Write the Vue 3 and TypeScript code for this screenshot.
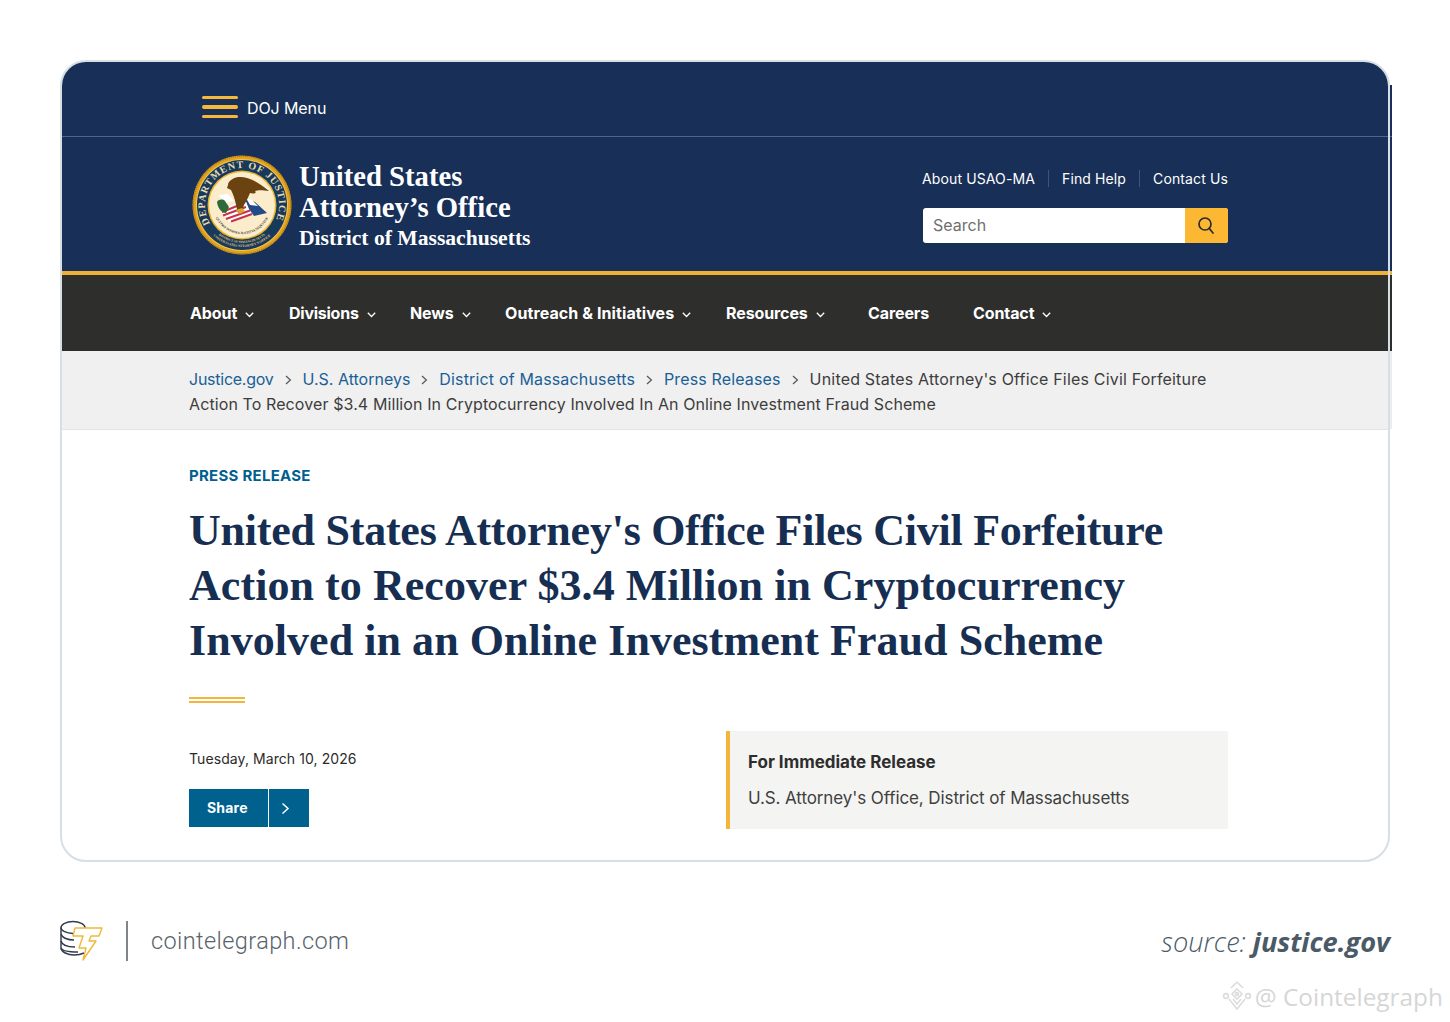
<script setup lang="ts">
interface NavItem {
  label: string
  caret: boolean
  width: number
  spacing: number
}

interface Crumb {
  label: string
  spacing: number
}

const navItems: NavItem[] = [
  { label: 'About', caret: true, width: 99, spacing: -0.1 },
  { label: 'Divisions', caret: true, width: 121, spacing: -0.25 },
  { label: 'News', caret: true, width: 95, spacing: -0.1 },
  { label: 'Outreach & Initiatives', caret: true, width: 221, spacing: 0.09 },
  { label: 'Resources', caret: true, width: 142, spacing: -0.1 },
  { label: 'Careers', caret: false, width: 105, spacing: -0.1 },
  { label: 'Contact', caret: true, width: 90, spacing: -0.1 },
]

const utilityLinks = ['About USAO-MA', 'Find Help', 'Contact Us']

const crumbs: Crumb[] = [
  { label: 'Justice.gov', spacing: -0.25 },
  { label: 'U.S. Attorneys', spacing: 0 },
  { label: 'District of Massachusetts', spacing: 0.16 },
  { label: 'Press Releases', spacing: 0.14 },
]

// the serif is a little off per line, so each line gets its own tracking
const titleLines = [
  { text: "United States Attorney's Office Files Civil Forfeiture", spacing: -0.23 },
  { text: 'Action to Recover $3.4 Million in Cryptocurrency', spacing: 0.06 },
  { text: 'Involved in an Online Investment Fraud Scheme', spacing: 0.05 },
]
</script>

<template>
  <div class="page">
    <div class="card-wrap">
      <section class="card">
        <div class="topbar">
          <div class="burger"><i></i><i></i><i></i></div>
          <span class="menu-label">DOJ Menu</span>
        </div>

        <header class="masthead">
          <div class="brand">
            <svg class="seal" viewBox="0 0 100 100" width="100" height="100">
              <defs>
                <path id="sealTop" d="M18 68.5 A37 37 0 1 1 82 68.5" />
                <path id="sealLow1" d="M17.8 77 A42 42 0 0 0 82.2 77" />
                <path id="sealLow2" d="M20.9 74.4 A38 38 0 0 0 79.1 74.4" />
                <path id="sealMotto" d="M22.7 59.9 A29 29 0 0 0 77.3 59.9" />
              </defs>
              <circle cx="50" cy="50" r="49.5" fill="#e0a21f" />
              <circle cx="50" cy="50" r="48.7" fill="none" stroke="#8f6510" stroke-width="1" stroke-dasharray="1 1" />
              <circle cx="50" cy="50" r="46" fill="#f3c64d" />
              <circle cx="50" cy="50" r="45" fill="#16395c" />
              <text class="seal-text" font-size="10" fill="#e9dcb0" textLength="150" lengthAdjust="spacing"><textPath href="#sealTop">DEPARTMENT OF JUSTICE</textPath></text>
              <text class="seal-text" font-size="3.4" fill="#e6c97a" text-anchor="middle"><textPath href="#sealLow1" startOffset="50%">UNITED STATES ATTORNEY'S OFFICE</textPath></text>
              <text class="seal-text" font-size="3.2" fill="#e6c97a" text-anchor="middle"><textPath href="#sealLow2" startOffset="50%">DISTRICT OF MASSACHUSETTS</textPath></text>
              <circle cx="50" cy="50" r="34.5" fill="#e8b52f" />
              <circle cx="50" cy="50" r="33" fill="#fbeccb" />
              <text class="seal-text" font-size="3.4" fill="#3a3a2a" text-anchor="middle"><textPath href="#sealMotto" startOffset="50%">QUI PRO DOMINA JUSTITIA SEQUITUR</textPath></text>
              <path d="M26 40 L36 39 L42 46 L34 48 Z" fill="#fff" />
              <path d="M28 55 L53 44 L62 58 L38 67 Z" fill="#fff" />
              <path d="M30 57 L50 49 M31 60.5 L54 52 M34 64 L58 55.5 M39 66.5 L60 59" stroke="#c9304a" stroke-width="2" fill="none" />
              <path d="M25 47 C27 44 31 44 33 46 L37 52 L34 58 C30 58 26 54 25 47 Z" fill="#2c6a38" />
              <path d="M53 44 L63 47 L75 58 L62 61 L57 54 Z" fill="#234a86" />
              <path d="M54 43 L60 45 L66 51 L58 50 Z" fill="#fff" />
              <path d="M36 30 C36 26 41 23 46 22 C56 21 68 28 77 36 C70 35 66 35 63 36 C65 38 62 39 58 38 C56 43 54 47 52 50 L50 56 L46 58 L44 50 C43 44 41 39 39 35 L35 33 Z" fill="#6b4310" />
              <path d="M44 55 L50 53 L53 56 L48 59 Z" fill="#d9a52c" />
            </svg>
            <div class="brand-text">
              <div class="brand-main">United States</div>
              <div class="brand-main">Attorney’s Office</div>
              <div class="brand-sub">District of Massachusetts</div>
            </div>
          </div>
          <div class="tools">
            <nav class="utility">
              <a v-for="link in utilityLinks" :key="link">{{ link }}</a>
            </nav>
            <div class="search">
              <span class="search-input">Search</span>
              <span class="search-btn">
                <svg width="20" height="20" viewBox="0 0 20 20" fill="none" stroke="#2b2b2b" stroke-width="1.7" stroke-linecap="round">
                  <circle cx="9" cy="8" r="6" />
                  <path d="M13.2 12.4 L17 17" />
                </svg>
              </span>
            </div>
          </div>
        </header>

        <nav class="mainnav">
          <a
            v-for="item in navItems"
            :key="item.label"
            class="nav-item"
            :style="{ width: item.width + 'px', letterSpacing: item.spacing + 'px' }"
          >
            <span>{{ item.label }}</span>
            <svg v-if="item.caret" class="caret" width="9" height="6" viewBox="0 0 9 6" fill="none" stroke="#fff" stroke-width="1.3"><path d="M0.8 0.8 L4.5 4.5 L8.2 0.8" /></svg>
          </a>
        </nav>

        <div class="breadcrumb">
          <div class="crumb-line">
            <template v-for="crumb in crumbs" :key="crumb.label">
              <a :style="{ letterSpacing: crumb.spacing + 'px' }">{{ crumb.label }}</a>
              <svg class="sep" width="7" height="10" viewBox="0 0 7 10" fill="none" stroke="#555" stroke-width="1.2"><path d="M1 1 L5.4 5 L1 9" /></svg>
            </template>
            <span class="current-a">United States Attorney's Office Files Civil Forfeiture</span>
          </div>
          <div class="current-b">Action To Recover $3.4 Million In Cryptocurrency Involved In An Online Investment Fraud Scheme</div>
        </div>

        <main class="content">
          <div class="eyebrow">PRESS RELEASE</div>
          <h1>
            <span v-for="line in titleLines" :key="line.text" :style="{ letterSpacing: line.spacing + 'px' }">{{ line.text }}</span>
          </h1>
          <div class="rule"></div>
          <div class="meta">
            <div class="meta-left">
              <div class="date">Tuesday, March 10, 2026</div>
              <div class="share">
                <span class="share-label">Share</span>
                <span class="share-arrow">
                  <svg width="9" height="13" viewBox="0 0 9 13" fill="none" stroke="#fff" stroke-width="1.5"><path d="M1.5 1.5 L7 6.5 L1.5 11.5" /></svg>
                </span>
              </div>
            </div>
            <aside class="release">
              <strong>For Immediate Release</strong>
              <span>U.S. Attorney's Office, District of Massachusetts</span>
            </aside>
          </div>
        </main>
      </section>
      <div class="edge"></div>
    </div>

    <footer class="footer">
      <div class="ct">
        <svg width="44" height="42" viewBox="0 0 44 42" fill="none">
          <g stroke="#2f3a4a" stroke-width="1.4">
            <ellipse cx="13" cy="7.5" rx="12" ry="6" />
            <path d="M1 7.5 V28 C1 32 8 35 14 35 C18 35 22 34 24 33" />
            <path d="M1 14 C2 18 8 20 14 20" />
            <path d="M1 21 C2 25 8 27 15 27" />
            <path d="M1 28 C2 31 8 32 18 32" />
          </g>
          <path d="M15 8 H42 L39 16 H31 L29 21 H36 L23 40 L26 28 H19 L23 16 H13 Z" fill="#fff" stroke="#eeb93a" stroke-width="1.4" stroke-linejoin="round" />
        </svg>
        <span class="ct-bar"></span>
        <span class="ct-name">cointelegraph.com</span>
      </div>
      <div class="source"><span>source:</span> <b>justice.gov</b></div>
    </footer>

    <div class="watermark">
      <svg width="30" height="32" viewBox="0 0 30 32" fill="none" stroke="#dcdcdc" stroke-width="1.6">
        <path d="M15 8 L20 13 L15 18 L10 13 Z" />
        <circle cx="15" cy="13" r="1.4" />
        <path d="M15 1 L21 7 M15 1 L9 7" />
        <circle cx="4" cy="15" r="2.4" />
        <circle cx="26" cy="15" r="2.4" />
        <path d="M7 18 L15 28 L23 18" />
        <path d="M11 18 L15 23 L19 18" />
      </svg>
      <span>@ Cointelegraph</span>
    </div>
  </div>
</template>

<style>
html,
body {
  margin: 0;
  background: #fff;
}
</style>

<style scoped>
.page {
  position: relative;
  width: 1450px;
  height: 1022px;
  box-sizing: border-box;
  padding: 60px 60px 0;
  overflow: hidden;
  font-family: Inter, "Noto Sans", sans-serif;
}

.card-wrap {
  position: relative;
}

.card {
  box-sizing: border-box;
  width: 1330px;
  height: 802px;
  border: 2px solid #d6e0e4;
  border-radius: 26px;
  background: #fff;
  overflow: hidden;
}

/* screenshot bleed: the dark bands stick out past the card's right border */
.edge {
  position: absolute;
  top: 25px;
  left: 1330px;
  width: 2px;
  height: 344px;
  background: linear-gradient(
    #182f57 0 51px,
    #50658f 51px 52px,
    #182f57 52px 186px,
    #eeb135 186px 190px,
    #2e2e2d 190px 266px,
    #ececec 266px 100%
  );
}

.topbar {
  display: flex;
  align-items: center;
  height: 75px;
  padding: 18px 0 0 140px;
  box-sizing: border-box;
  background: #182f57;
  border-bottom: 1px solid #50658f;
}

.burger {
  display: flex;
  flex-direction: column;
  gap: 6.1px;
  width: 36px;
  margin: 0 9px 2px 0;
}

.burger i {
  display: block;
  height: 3.4px;
  border-radius: 2px;
  background: #f6b73c;
}

.menu-label {
  color: #fff;
  font-size: 16px;
  letter-spacing: -0.1px;
}

.masthead {
  display: flex;
  justify-content: space-between;
  align-items: center;
  height: 134px;
  padding: 0 160px 0 130px;
  background: #182f57;
  border-bottom: 4px solid #eeb135;
}

.brand {
  display: flex;
  align-items: center;
  gap: 7px;
  margin-top: 2px;
}

.brand-text {
  padding-top: 2px;
  color: #fff;
  font-family: "Liberation Serif", serif;
  font-weight: 700;
}

.brand-main {
  font-size: 28.7px;
  line-height: 31px;
}

.brand-sub {
  margin-top: 2px;
  font-size: 21.6px;
  line-height: 27px;
}

.seal-text {
  font-family: "Liberation Serif", serif;
  font-weight: 700;
}

.tools {
  display: flex;
  flex-direction: column;
  align-items: flex-end;
  gap: 21px;
  width: 305px;
  margin-top: 5px;
}

.utility {
  display: flex;
  white-space: nowrap;
}

.utility a {
  padding: 0 13px;
  border-left: 1px solid #3c5580;
  color: #fff;
  font-size: 14px;
  line-height: 17px;
  letter-spacing: 0.12px;
}

.utility a:first-child {
  border-left: 0;
}

.utility a:last-child {
  padding-right: 0;
}

.search {
  display: flex;
  width: 305px;
  height: 35px;
  border-radius: 3px;
  overflow: hidden;
  background: #fff;
}

.search-input {
  flex: 1;
  padding-left: 10px;
  color: #6f6f6f;
  font-size: 16px;
  line-height: 35px;
}

.search-btn {
  display: flex;
  align-items: center;
  justify-content: center;
  box-sizing: border-box;
  width: 43px;
  padding-right: 2px;
  background: #fdb833;
}

.mainnav {
  display: flex;
  align-items: center;
  height: 76px;
  padding-left: 128px;
  background: #2e2e2d;
}

.nav-item {
  display: flex;
  align-items: center;
  color: #fff;
  font-size: 16px;
  font-weight: 700;
  white-space: nowrap;
}

.caret {
  margin: 3px 0 0 8px;
}

.breadcrumb {
  height: 79px;
  box-sizing: border-box;
  padding: 16px 160px 0 127px;
  background: #f0f0f0;
  border-bottom: 1px solid #e4e4e4;
  color: #3d3d3d;
  font-size: 16px;
  line-height: 25px;
}

.crumb-line {
  display: flex;
  align-items: center;
  white-space: nowrap;
}

.breadcrumb a {
  color: #1a5f96;
}

.current-a {
  letter-spacing: 0.18px;
}

.current-b {
  letter-spacing: 0.1px;
}

.sep {
  margin: 0 11px;
}

.content {
  padding: 37px 160px 0 127px;
}

.eyebrow {
  color: #005f8e;
  font-size: 15px;
  font-weight: 700;
  line-height: 18px;
  letter-spacing: 0.26px;
}

h1 {
  margin: 18px 0 0;
  color: #162e51;
  font-family: "Liberation Serif", serif;
  font-size: 44px;
  font-weight: 700;
  line-height: 55px;
}

h1 span {
  display: block;
  white-space: nowrap;
}

.rule {
  width: 56px;
  height: 2px;
  margin-top: 29px;
  border-top: 2px solid #f3b53b;
  border-bottom: 2px solid #f3b53b;
}

.meta {
  display: flex;
  justify-content: space-between;
  margin-top: 28px;
}

.date {
  margin-top: 18px;
  color: #2b2b2b;
  font-size: 14px;
  line-height: 20px;
  letter-spacing: 0.08px;
}

.share {
  display: flex;
  width: 120px;
  height: 38px;
  margin-top: 20px;
  background: #00618f;
  color: #fff;
}

.share-label {
  width: 80px;
  box-sizing: border-box;
  padding-left: 18px;
  border-right: 1px solid #fff;
  font-size: 14px;
  font-weight: 700;
  line-height: 38px;
  letter-spacing: 0.2px;
}

.share-arrow {
  display: flex;
  align-items: center;
  padding-left: 12px;
}

.release {
  display: flex;
  flex-direction: column;
  gap: 16px;
  width: 502px;
  height: 98px;
  box-sizing: border-box;
  padding: 21px 18px 0;
  border-left: 4px solid #f3b53b;
  background: #f4f4f2;
  color: #3f3f3f;
  font-size: 17px;
  line-height: 20px;
}

.release span {
  letter-spacing: -0.1px;
}

.release strong {
  color: #2d2d2d;
}

.footer {
  display: flex;
  justify-content: space-between;
  align-items: center;
  margin-top: 58px;
}

.ct {
  display: flex;
  align-items: center;
}

.ct-bar {
  width: 2px;
  height: 40px;
  margin: 0 23px 0 22px;
  background: #7f8589;
}

.ct-name {
  color: #59636b;
  font-family: Roboto, sans-serif;
  font-size: 23.5px;
  font-weight: 300;
  letter-spacing: 0.4px;
}

.source {
  color: #4a5a66;
  font-family: "Open Sans", sans-serif;
  font-size: 27.2px;
  font-style: italic;
  font-weight: 300;
}

.source b {
  font-weight: 700;
}

.watermark {
  position: absolute;
  right: 7px;
  top: 980px;
  display: flex;
  align-items: center;
  gap: 3px;
  color: #d6d6d6;
  font-family: "Open Sans", sans-serif;
  font-size: 24.4px;
}
</style>
